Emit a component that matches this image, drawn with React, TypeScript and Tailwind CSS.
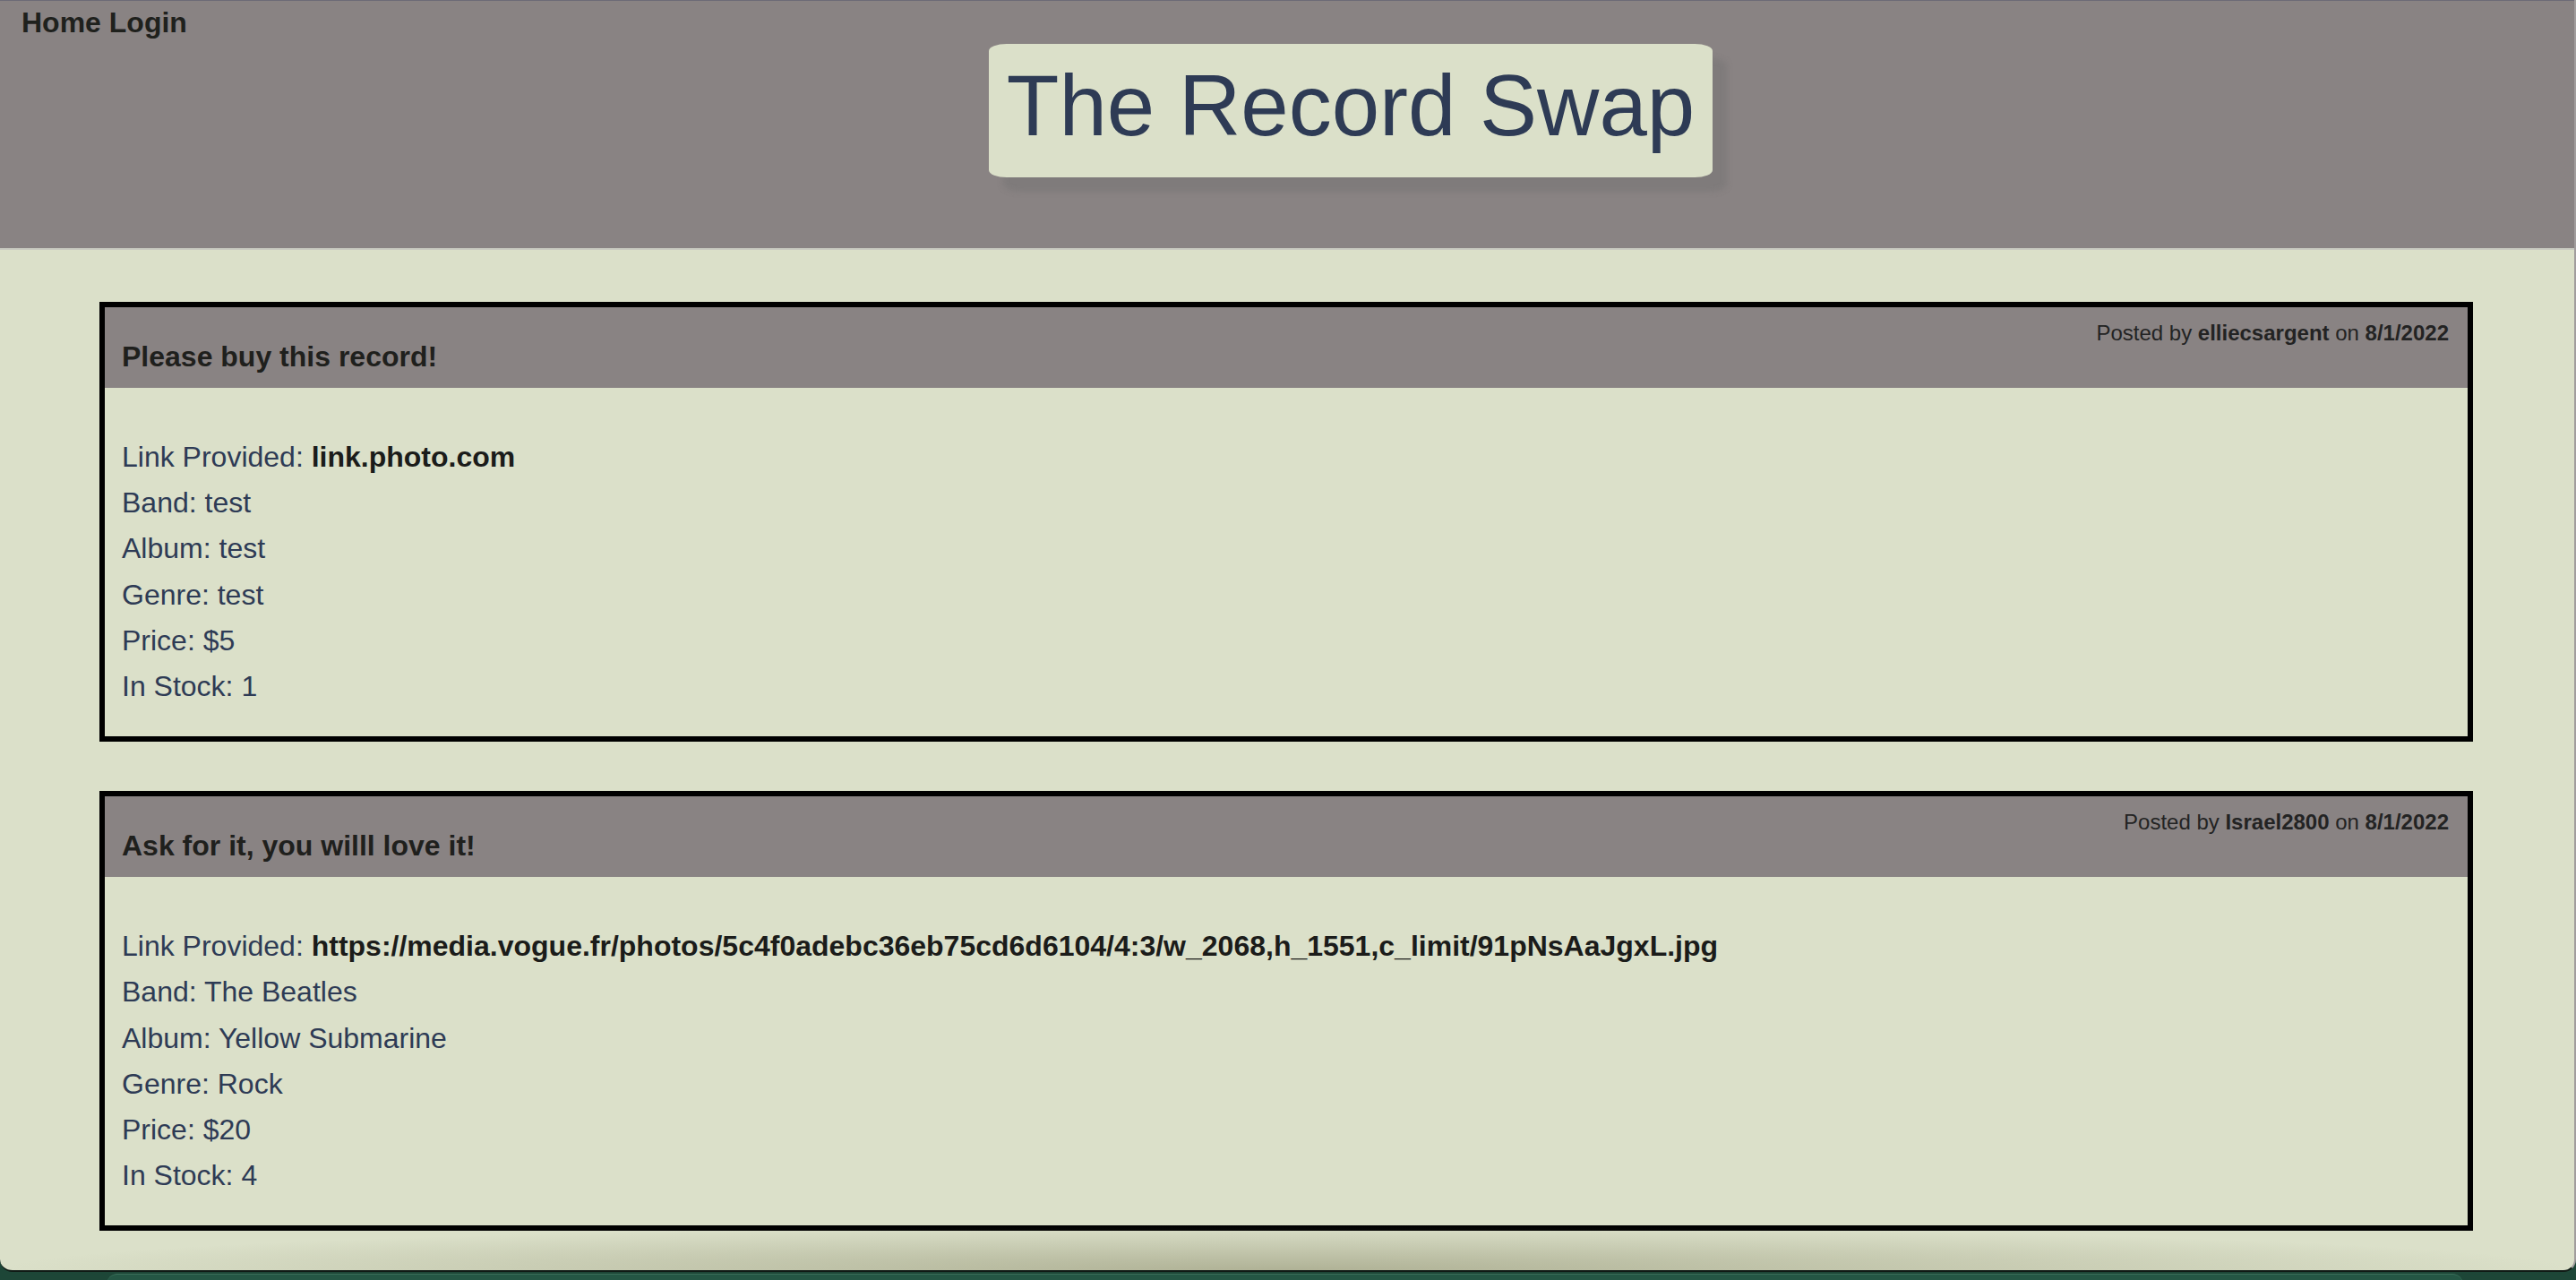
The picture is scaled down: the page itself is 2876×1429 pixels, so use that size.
const posts = [
  {
    title: 'Please buy this record!',
    user: 'elliecsargent',
    date: '8/1/2022',
    link: 'link.photo.com',
    band: 'test',
    album: 'test',
    genre: 'test',
    price: 5,
    stock: 1,
  },
  {
    title: 'Ask for it, you willl love it!',
    user: 'Israel2800',
    date: '8/1/2022',
    link: 'https://media.vogue.fr/photos/5c4f0adebc36eb75cd6d6104/4:3/w_2068,h_1551,c_limit/91pNsAaJgxL.jpg',
    band: 'The Beatles',
    album: 'Yellow Submarine',
    genre: 'Rock',
    price: 20,
    stock: 4,
  },
];

type Post = (typeof posts)[number];

function PostCard({ post }: { post: Post }) {
  return (
    <article className="border-[6px] border-black">
      <div className="flex h-[90px] flex-col bg-[#898383] pl-[19px] pr-[21px] pt-[19px]">
        <p className="text-right text-[24px] leading-[20px] text-[#232323]">
          Posted by <b>{post.user}</b> on <b>{post.date}</b>
        </p>
        <h2 className="text-[32px] font-bold leading-none text-[#1f201d]">{post.title}</h2>
      </div>
      <div className="whitespace-nowrap pb-[30px] pl-[19px] pt-[52px] text-[32px] leading-[51.2px] text-[#2e3b55]">
        <p>
          Link Provided: <b className="text-[#1b1c1a]">{post.link}</b>
        </p>
        <p>Band: {post.band}</p>
        <p>Album: {post.album}</p>
        <p>Genre: {post.genre}</p>
        <p>Price: ${post.price}</p>
        <p>In Stock: {post.stock}</p>
      </div>
    </article>
  );
}

export default function App() {
  return (
    <div className="h-[1429px] w-full overflow-hidden bg-[#1d4637] font-['Liberation_Sans',Arial,sans-serif]">
      <div className="relative flex h-[1420px] flex-col overflow-hidden rounded-b-[14px] border-b-2 border-r-2 border-b-[#101b16] border-r-[#a19d9d] bg-[#dbe0c9]">
        <header className="h-[279px] shrink-0 border-b-2 border-t border-b-[#c9cac1] border-t-[#6c6b76] bg-[#898383]">
          <nav className="pl-[24px] pt-[8px] text-[32px] font-bold leading-none text-[#1f211d]">
            <a href="#">Home</a> <a href="#">Login</a>
          </nav>
          <h1 className="ml-[1104px] mt-[8px] w-[808px] rounded-[20px/8px] bg-[#dbe0c9] pb-[25px] pt-[14px] text-center text-[96px] font-normal leading-[110px] text-[#2e3b55] shadow-[16px_16px_6px_rgba(110,110,110,0.35)]">
            The Record Swap
          </h1>
        </header>

        <main className="flex flex-col gap-[55px] pl-[111px] pr-[113px] pt-[58px]">
          {posts.map((post) => (
            <PostCard key={post.user} post={post} />
          ))}
        </main>

        <div className="pointer-events-none absolute inset-x-0 bottom-0 h-[50px] bg-[radial-gradient(ellipse_50%_100%_at_50%_100%,rgba(140,140,108,0.55),transparent)]" />
      </div>
      <div className="ml-[119px] mt-[2px] h-[20px] w-[2631px] rounded-t-[12px] border-t border-[#3a6e59] bg-[#245644]" />
    </div>
  );
}
